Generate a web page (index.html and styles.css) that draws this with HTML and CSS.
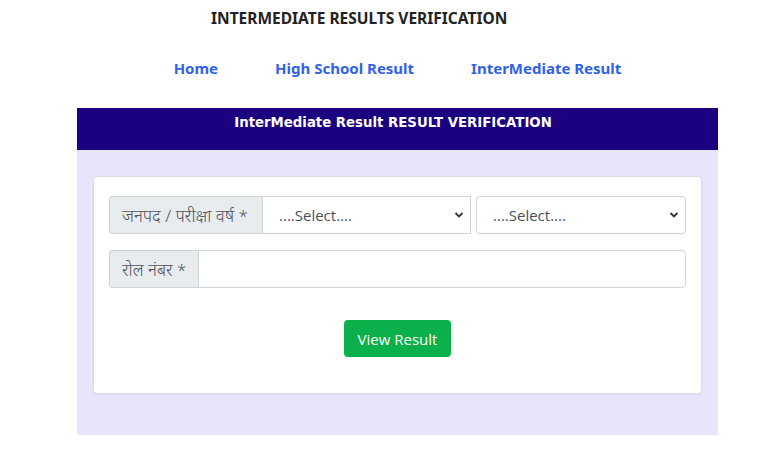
FILE: index.html
```html
<!DOCTYPE html>
<html lang="hi">
<head>
<meta charset="utf-8">
<title>Intermediate Results Verification</title>
<link rel="stylesheet" href="styles.css">
</head>
<body>
<div class="page">
  <h1 class="site-title">INTERMEDIATE RESULTS VERIFICATION</h1>
  <nav class="nav">
    <a href="#" class="nav-link">Home</a>
    <a href="#" class="nav-link">High School Result</a>
    <a href="#" class="nav-link">InterMediate Result</a>
  </nav>
  <section class="panel">
    <div class="panel-head">InterMediate Result RESULT VERIFICATION</div>
    <div class="panel-body">
      <form class="card">
        <div class="input-group">
          <span class="addon addon-wide">जनपद / परीक्षा वर्ष *</span>
          <select class="select select-first"><option>....Select....</option></select>
          <select class="select select-second"><option>....Select....</option></select>
        </div>
        <div class="input-group">
          <span class="addon">रोल नंबर *</span>
          <input class="text-input" type="text">
        </div>
        <div class="actions">
          <button type="button" class="btn">View Result</button>
        </div>
      </form>
    </div>
  </section>
</div>
</body>
</html>
```
FILE: styles.css
```css
html, body {
  margin: 0;
  padding: 0;
  background: #ffffff;
}
body {
  font-family: "Noto Sans", "Open Sans", sans-serif;
  color: #212529;
}
.page {
  width: 641px;
  margin-left: 77px;
}
.site-title {
  margin: 0;
  padding: 8px 0 0 134px;
  font-size: 15.5px;
  line-height: 20px;
  font-weight: 700;
  color: #222222;
}
.nav {
  display: flex;
  justify-content: center;
  gap: 57px;
  padding-top: 30px;
  height: 80px;
  box-sizing: border-box;
}
.nav-link {
  font-size: 15px;
  line-height: 20px;
  font-weight: 700;
  color: #2f62e6;
  text-decoration: none;
}
.panel-head {
  background: #1b0080;
  color: #ffffff;
  height: 42px;
  box-sizing: border-box;
  padding: 7px 9px 0 0;
  text-align: center;
  font-family: "DejaVu Sans", Verdana, sans-serif;
  font-weight: 700;
  font-size: 13.3px;
  line-height: 16px;
}
.panel-body {
  background: #e6e5fc;
  padding: 26px 16px 41px;
}
.card {
  background: #ffffff;
  border: 1px solid #dcdce6;
  border-radius: 4px;
  box-shadow: 0 1px 2px rgba(0, 0, 0, 0.06);
  padding: 19px 15px 36px;
  display: flex;
  flex-direction: column;
  gap: 16px;
}
.input-group {
  display: flex;
  height: 38px;
}
.addon {
  display: flex;
  align-items: center;
  box-sizing: border-box;
  padding: 0 12px;
  background: #e9ecef;
  border: 1px solid #ced4da;
  border-right: none;
  border-radius: 4px 0 0 4px;
  color: #50565c;
  font-size: 17px;
  font-weight: 300;
  white-space: nowrap;
}
.addon-wide {
  width: 153px;
}
.select {
  appearance: none;
  -webkit-appearance: none;
  box-sizing: border-box;
  height: 38px;
  border: 1px solid #ced4da;
  background: #ffffff url("data:image/svg+xml,%3Csvg xmlns='http://www.w3.org/2000/svg' width='10' height='8' viewBox='0 0 10 8'%3E%3Cpath d='M1.5 2 L5 5.5 L8.5 2' fill='none' stroke='%23333' stroke-width='1.8'/%3E%3C/svg%3E") no-repeat right 6px center;
  padding: 0 24px 0 16px;
  font-family: "Open Sans", "Noto Sans", sans-serif;
  font-size: 15px;
  color: #495057;
  margin: 0;
}
.select-first {
  width: 209px;
}
.select-second {
  width: 210px;
  margin-left: 5px;
  border-radius: 4px;
}
.text-input {
  flex: 1;
  box-sizing: border-box;
  height: 38px;
  margin: 0;
  border: 1px solid #ced4da;
  border-radius: 0 4px 4px 0;
  padding: 0 12px;
  font-size: 16px;
}
.actions {
  display: flex;
  justify-content: center;
  padding-top: 16px;
}
.btn {
  width: 107px;
  height: 37px;
  border: none;
  border-radius: 4px;
  background: #0bb04a;
  color: #ffffff;
  font-family: "Open Sans", "Noto Sans", sans-serif;
  font-size: 15px;
  cursor: pointer;
}
```
